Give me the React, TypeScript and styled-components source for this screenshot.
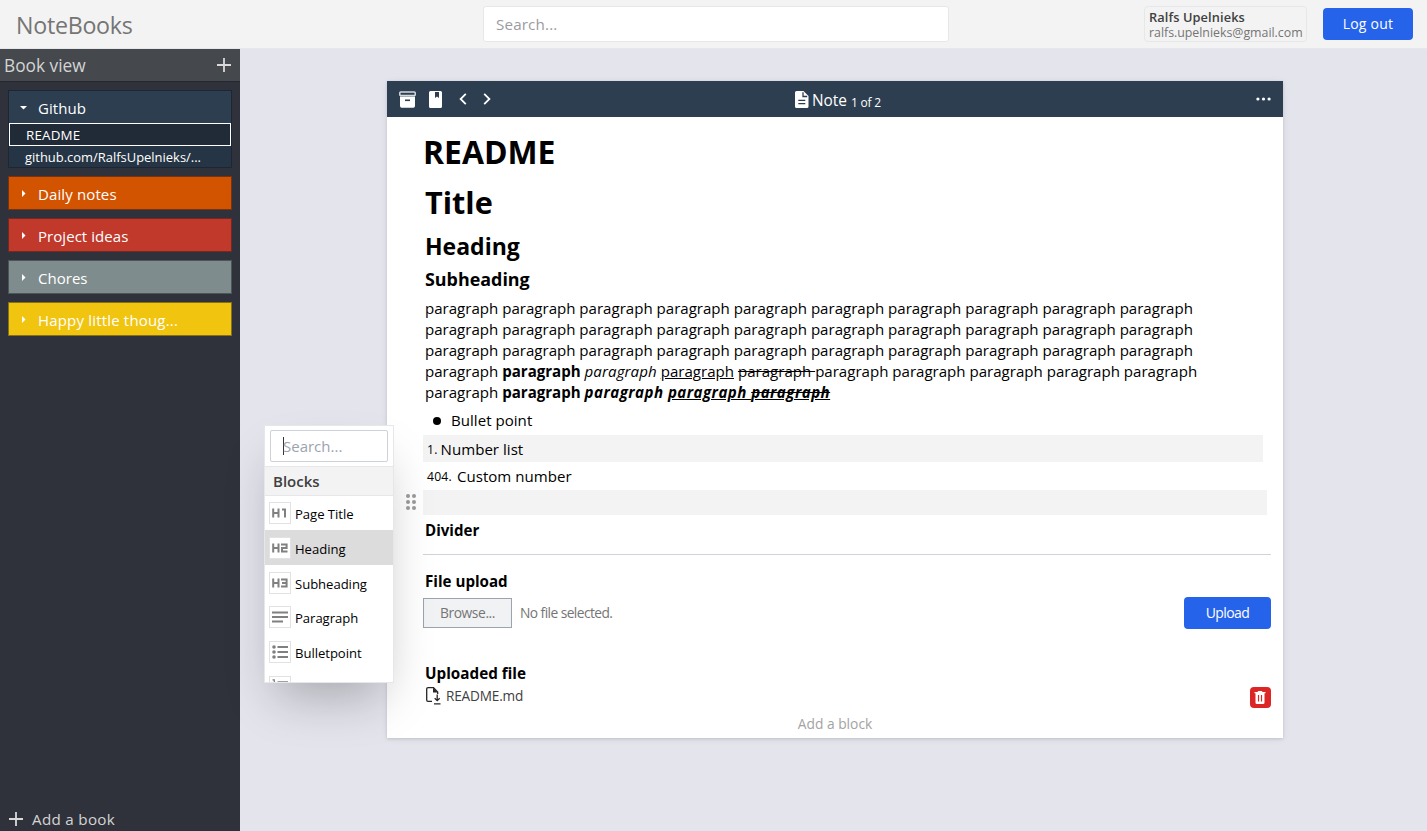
import React from "react";
import styled, { createGlobalStyle } from "styled-components";

const GlobalStyle = createGlobalStyle`
  * { box-sizing: border-box; }
  html, body { margin: 0; padding: 0; }
  body {
    font-family: "Open Sans", "Noto Sans", sans-serif;
    font-size: 15px;
    color: #000;
    background: #e4e4ed;
    overflow: hidden;
  }
  svg { display: block; flex: none; }
  button, input { font-family: inherit; margin: 0; }
`;

const Page = styled.div`
  display: flex;
  flex-direction: column;
  width: 100%;
  height: 100vh;
  min-height: 831px;
`;

const TopBar = styled.header`
  display: grid;
  grid-template-columns: 483px 466px 1fr;
  align-items: center;
  height: 49px;
  flex: none;
  background: #f3f3f3;
  border-bottom: 1px solid #e5e7eb;
`;

const Brand = styled.div`
  padding: 1px 0 0 16px;
  font-size: 23.2px;
  line-height: 32px;
  letter-spacing: -0.25px;
  color: #757575;
`;

const SearchInput = styled.input`
  height: 36px;
  padding: 0 12px;
  border: 1px solid #e5e7eb;
  border-radius: 3px;
  background: #fff;
  font-size: 15.2px;
  letter-spacing: 0.15px;
  outline: none;
  &::placeholder { color: #9b9b9f; opacity: 1; }
`;

const Account = styled.div`
  display: flex;
  justify-content: flex-end;
  align-items: center;
  gap: 16px;
  padding-right: 14px;
`;

const UserCard = styled.div`
  width: 163px;
  height: 36px;
  padding: 3px 4px 0;
  border: 1px solid #e5e7eb;
  border-radius: 4px;
  white-space: nowrap;
`;

const UserName = styled.div`
  font-size: 12.8px;
  font-weight: 600;
  line-height: 15px;
  letter-spacing: 0.1px;
  color: #404040;
`;

const UserMail = styled.div`
  font-size: 12.4px;
  line-height: 15px;
  letter-spacing: -0.03px;
  color: #757575;
`;

const PrimaryButton = styled.button<{ $width: number; $tracking: string }>`
  width: ${(p) => p.$width}px;
  height: 32px;
  padding: 0 0 1px;
  border: 0;
  border-radius: 4px;
  background: #2563eb;
  color: #fff;
  font-size: 14px;
  letter-spacing: ${(p) => p.$tracking};
`;

const Body = styled.div`
  display: flex;
  flex: 1;
  min-height: 0;
`;

const Sidebar = styled.aside`
  display: flex;
  flex-direction: column;
  width: 240px;
  flex: none;
  background: #2f323b;
`;

const SidebarHeader = styled.div`
  display: flex;
  align-items: center;
  justify-content: space-between;
  height: 33px;
  padding: 0 9px 0 4px;
  background: #45484d;
  border-bottom: 1px solid #26282e;
  color: #d4d4d4;
  font-size: 17.3px;
`;

const BookList = styled.div`
  display: flex;
  flex-direction: column;
  gap: 8px;
  flex: 1;
  padding: 8px;
`;

const Book = styled.section<{ $color: string; $edge: string }>`
  border: 1px solid ${(p) => p.$edge};
  background: ${(p) => p.$color};
  color: #fff;
`;

const BookTitle = styled.div<{ $tracking?: number }>`
  display: flex;
  align-items: center;
  height: 32px;
  padding-left: 10px;
  gap: 10px;
  font-size: 15px;
  line-height: 20px;
  letter-spacing: ${(p) => p.$tracking ?? 0.08}px;
  span { padding-top: 1px; }
`;

const NoteLink = styled.div<{ $active?: boolean }>`
  height: ${(p) => (p.$active ? 23 : 21)}px;
  padding-left: 16px;
  border: ${(p) => (p.$active ? "1px solid #fff" : "0")};
  background: ${(p) => (p.$active ? "#212b38" : "#263545")};
  font-size: ${(p) => (p.$active ? 13.4 : 12.95)}px;
  letter-spacing: ${(p) => (p.$active ? 0.18 : 0)}px;
  line-height: 22px;
  white-space: nowrap;
`;

const AddBook = styled.button`
  display: flex;
  align-items: center;
  gap: 9px;
  height: 24px;
  padding: 0 9px;
  border: 0;
  background: none;
  color: #d4d4d4;
  font-size: 15.2px;
  letter-spacing: 0.3px;
`;

const Main = styled.main`
  flex: 1;
  padding: 32px 144px 0 147px;
  background: #e4e4ed;
`;

const Note = styled.article`
  position: relative;
  width: 896px;
  height: 657px;
  background: #fff;
  box-shadow: 0 1px 3px rgba(0, 0, 0, 0.12), 0 1px 8px rgba(0, 0, 0, 0.06);
`;

const NoteBar = styled.div`
  display: grid;
  grid-template-columns: 1fr auto 1fr;
  align-items: center;
  height: 36px;
  padding: 0 12px;
  background: #2c3e50;
  color: #fff;
`;

const BarTools = styled.div`
  display: flex;
  align-items: center;
  gap: 13px;
`;

const Pager = styled.div`
  display: flex;
  gap: 16px;
  margin-left: 4px;
`;

const BarTitle = styled.div`
  display: flex;
  align-items: baseline;
  padding: 2px 0 0 6px;
  font-size: 15.4px;
  svg { align-self: center; margin: -2px 3px 0 0; }
  small { font-size: 12px; margin-left: 4px; letter-spacing: -0.2px; transform: translateY(1px); }
`;

const BarMenu = styled.div`
  display: flex;
  justify-content: flex-end;
`;

const Blocks = styled.div`
  display: flex;
  flex-direction: column;
  padding: 14px 12px 0 36px;
`;

const Block = styled.div<{ $h: number; $size?: number; $inset?: number; $above?: number }>`
  height: ${(p) => p.$h}px;
  line-height: ${(p) => p.$h}px;
  margin-top: ${(p) => p.$above ?? 0}px;
  padding-left: ${(p) => p.$inset ?? 2}px;
  font-size: ${(p) => p.$size ?? 15.1}px;
  font-weight: 700;
  white-space: nowrap;
`;

const Paragraph = styled.p`
  margin: 2px 0 0;
  padding-left: 2px;
  font-size: 15.07px;
  line-height: 21px;
  white-space: nowrap;
  em { letter-spacing: 0.1px; }
  b em { letter-spacing: 0.47px; }
`;

const ListRow = styled.div<{ $h: number; $shaded?: boolean; $trim?: number; $gap: number; $top?: number }>`
  display: flex;
  align-items: center;
  gap: ${(p) => p.$gap}px;
  height: ${(p) => p.$h}px;
  margin-right: ${(p) => p.$trim ?? 0}px;
  padding: ${(p) => p.$top ?? 1}px 0 0 4px;
  background: ${(p) => (p.$shaded ? "#f3f3f3" : "transparent")};
  font-size: 15.05px;
  letter-spacing: 0.03px;
`;

const Bullet = styled.i`
  width: 8px;
  height: 8px;
  margin: 2px 0 0 6px;
  border-radius: 50%;
  background: #000;
`;

const Marker = styled.span`
  font-size: 12.2px;
  letter-spacing: 0.2px;
`;

const EmptyRow = styled.div`
  position: relative;
  height: 25px;
  margin-right: 4px;
  background: #f3f3f3;
`;

const DragHandle = styled.div`
  position: absolute;
  left: -17px;
  top: 4px;
  display: grid;
  grid-template-columns: 4px 4px;
  gap: 2px;
  i { width: 4px; height: 4px; border-radius: 50%; background: #9b9b9b; }
`;

const Rule = styled.hr`
  width: 100%;
  height: 1px;
  margin: 8px 0 15px;
  border: 0;
  background: #d1d3da;
`;

const FileRow = styled.div`
  display: flex;
  align-items: center;
  height: 32px;
  margin-top: 4px;
  color: #757575;
  font-size: 13.8px;
  letter-spacing: -0.57px;
  > span { padding-bottom: 2px; }
  ${PrimaryButton} { margin-left: auto; }
`;

const BrowseButton = styled.button`
  width: 89px;
  height: 30px;
  margin-right: 8px;
  padding: 0 0 2px;
  border: 1px solid #9ca3af;
  background: #f1f2f4;
  color: #757575;
  font-size: 13.8px;
  letter-spacing: -0.4px;
`;

const Attachment = styled.div`
  display: flex;
  align-items: center;
  gap: 5px;
  height: 24px;
  padding-left: 3px;
  font-size: 13.6px;
  letter-spacing: -0.17px;
  color: #404040;
  > span { padding-bottom: 1px; }
`;

const DeleteButton = styled.button`
  display: flex;
  align-items: center;
  justify-content: center;
  width: 21px;
  height: 21px;
  margin: 2px 0 0 auto;
  padding: 0 1px 0 0;
  border: 0;
  border-radius: 4px;
  background: #dc2626;
`;

const AddBlock = styled.div`
  height: 30px;
  margin-right: 24px;
  line-height: 31px;
  text-align: center;
  font-size: 13.8px;
  color: #a3a3a3;
`;

const Popup = styled.div`
  position: absolute;
  left: -123px;
  top: 344px;
  width: 130px;
  height: 258px;
  overflow: hidden;
  border: 1px solid #e5e7eb;
  background: #fff;
  box-shadow: 0 25px 50px -12px rgba(0, 0, 0, 0.27);
`;

const PopupSearch = styled.div`
  display: flex;
  align-items: center;
  height: 32px;
  margin: 4px 5px 4px;
  padding-left: 12px;
  border: 1px solid #cdd1d8;
  border-radius: 2px;
  color: #9ca3af;
  font-size: 15px;
`;

const Caret = styled.i`
  width: 1px;
  height: 18px;
  margin-right: -1px;
  background: #333;
`;

const PopupHeading = styled.div`
  height: 30px;
  padding-left: 8px;
  border-top: 1px solid #e5e7eb;
  border-bottom: 1px solid #e5e7eb;
  background: #f3f3f3;
  color: #404040;
  font-size: 15px;
  font-weight: 600;
  line-height: 29px;
`;

const PopupItem = styled.div<{ $active?: boolean; $h?: number }>`
  display: flex;
  align-items: center;
  gap: 4px;
  height: ${(p) => p.$h ?? 35}px;
  padding-left: 4px;
  background: ${(p) => (p.$active ? "#dcdcdc" : "#fff")};
  font-size: 13.1px;
  letter-spacing: -0.04px;
  white-space: nowrap;
  span { padding-top: 2px; }
`;

const IconBox = styled.div`
  display: flex;
  align-items: center;
  justify-content: center;
  width: 22px;
  height: 22px;
  border: 1px solid #e2e2e2;
  background: #fff;
`;

const Plus = ({ size }: { size: number }) => (
  <svg width={size} height={size} viewBox="0 0 14 14" fill="none" stroke="#d9d9d9" strokeWidth="1.8">
    <path d="M7 0v14M0 7h14" />
  </svg>
);

const Triangle = ({ open }: { open?: boolean }) => (
  <svg width="9" height="9" viewBox="0 0 9 9" fill="#fff">
    <path d={open ? "M1 3h7L4.500 6.500z" : "M3 1l3.500 3.500L3 8z"} />
  </svg>
);

const ArchiveIcon = () => (
  <svg width="17" height="17" viewBox="0 0 17 17">
    <path d="M1 5.500h15V15a1.700 1.700 0 0 1-1.700 1.700H2.700A1.700 1.700 0 0 1 1 15z" fill="#fff" />
    <rect x="0.800" y="0.900" width="15.400" height="3.700" rx="0.800" fill="none" stroke="#d5d9dd" strokeWidth="1.500" />
    <path d="M6 9.300h5" stroke="#2c3e50" strokeWidth="1.600" />
  </svg>
);

const BookmarkIcon = () => (
  <svg width="13" height="17" viewBox="0 0 13 17">
    <path d="M1.500 0h10A1.500 1.500 0 0 1 13 1.500v14a1.500 1.500 0 0 1-1.500 1.500h-10A1.500 1.500 0 0 1 0 15.500v-14A1.500 1.500 0 0 1 1.500 0z" fill="#fff" />
    <path d="M6 1h4v6L8 5.400 6 7z" fill="#2c3e50" />
  </svg>
);

const Chevron = ({ right }: { right?: boolean }) => (
  <svg width="8" height="12" viewBox="0 0 8 12" fill="none" stroke="#fff" strokeWidth="1.800">
    <path d={right ? "M1.200 0.800L6.400 6l-5.200 5.200" : "M6.800 0.800L1.600 6l5.200 5.200"} />
  </svg>
);

const FileIcon = () => (
  <svg width="14" height="17" viewBox="0 0 14 17">
    <path d="M1.600 0H8.500L13.500 5v10.400A1.600 1.600 0 0 1 11.900 17H1.600A1.600 1.600 0 0 1 0 15.400V1.600A1.600 1.600 0 0 1 1.600 0z" fill="#fff" />
    <path d="M8 1.300V5.500h4.200M3.300 9.300h7M3.300 12.700h7" fill="none" stroke="#2c3e50" strokeWidth="1.300" />
  </svg>
);

const Dots = () => (
  <svg width="15" height="4" viewBox="0 0 15 4" fill="#fff">
    <circle cx="1.900" cy="2" r="1.600" />
    <circle cx="7.500" cy="2" r="1.600" />
    <circle cx="13.100" cy="2" r="1.600" />
  </svg>
);

const HeadingIcon = ({ level }: { level: 1 | 2 | 3 }) => {
  const digit = {
    1: "M10 2h3V10",
    2: "M9 2h5.600v3.500h-4.600v3.500h5.500",
    3: "M9 2h5.600v7H9M10 5.500h4.600",
  }[level];
  return (
    <svg width="16" height="12" viewBox="0 -0.500 16 12" fill="none" stroke="#808080" strokeWidth="2">
      <path d="M1.200 1v9M6.500 1v9M1.200 5.500h5.500" />
      <path d={digit} />
    </svg>
  );
};

const TextIcon = () => (
  <svg width="16" height="12" viewBox="0 0 16 12" stroke="#808080" strokeWidth="1.800">
    <path d="M0 1.500h16M0 6h16M0 10.500h11" />
  </svg>
);

const BulletIcon = () => (
  <svg width="16" height="14" viewBox="0 0 16 14" stroke="#808080" strokeWidth="1.800" fill="#808080">
    <path d="M5.500 2H16M5.500 7H16M5.500 12H16" />
    <g stroke="none">
      <circle cx="2" cy="2" r="1.800" />
      <circle cx="2" cy="7" r="1.800" />
      <circle cx="2" cy="12" r="1.800" />
    </g>
  </svg>
);

const NumberIcon = () => (
  <svg width="16" height="16" viewBox="0 0 16 16" fill="none" stroke="#808080" strokeWidth="1.300">
    <path d="M0.500 0.800h1.800V5M5.500 3H16M5.500 8H16M5.500 13H16M0.500 7h2.500L0.500 10h2.500M0.500 12h2.500v3.500H0.500" />
  </svg>
);

const DownloadFileIcon = () => (
  <svg width="15" height="18" viewBox="0 0 15 18" fill="none" stroke="#262626" strokeWidth="1.300">
    <path d="M6 14.300H2A1.300 1.300 0 0 1 .7 13V2A1.300 1.300 0 0 1 2 .7h5.500L11.700 5v2" />
    <path d="M7 .7V5.500h5z" fill="#262626" stroke="none" />
    <path d="M11.200 7.500v6M8.700 11.200l2.500 2.500 2.500-2.500M8 16.900h6.500" />
  </svg>
);

const TrashIcon = () => (
  <svg width="12" height="13" viewBox="0 0 12 13">
    <path d="M0.500 0.900H3.500L4.200 0h3.600l0.700 0.900h3V2.300h-1v9.200A1.400 1.400 0 0 1 9.100 13H2.900a1.400 1.400 0 0 1-1.400-1.500V2.300h-1z" fill="#fff" />
    <path d="M4.500 4v6.500M7.500 4v6.500" stroke="#dc2626" strokeWidth="1.200" />
  </svg>
);

const books = [
  { name: "Daily notes", color: "#d35400", edge: "#753312", tracking: 0.12 },
  { name: "Project ideas", color: "#c0392b", edge: "#732923", tracking: 0.05 },
  { name: "Chores", color: "#7f8c8d", edge: "#4c5557", tracking: 0.02 },
  { name: "Happy little thoug...", color: "#f1c40f", edge: "#87701a", tracking: 0.18 },
];

const words = (count: number) => Array(count).fill("paragraph").join(" ");

export default function App() {
  return (
    <Page>
      <GlobalStyle />
      <TopBar>
        <Brand>NoteBooks</Brand>
        <SearchInput placeholder="Search..." />
        <Account>
          <UserCard>
            <UserName>Ralfs Upelnieks</UserName>
            <UserMail>ralfs.upelnieks@gmail.com</UserMail>
          </UserCard>
          <PrimaryButton $width={90} $tracking="0.25px">Log out</PrimaryButton>
        </Account>
      </TopBar>
      <Body>
        <Sidebar>
          <SidebarHeader>
            Book view
            <Plus size={14} />
          </SidebarHeader>
          <BookList>
            <Book $color="#2c3e50" $edge="#1c2733">
              <BookTitle>
                <Triangle open />
                <span>Github</span>
              </BookTitle>
              <NoteLink $active>README</NoteLink>
              <NoteLink>github.com/RalfsUpelnieks/...</NoteLink>
            </Book>
            {books.map((book) => (
              <Book key={book.name} $color={book.color} $edge={book.edge}>
                <BookTitle $tracking={book.tracking}>
                  <Triangle />
                  <span>{book.name}</span>
                </BookTitle>
              </Book>
            ))}
          </BookList>
          <AddBook>
            <Plus size={14} />
            Add a book
          </AddBook>
        </Sidebar>
        <Main>
          <Note>
            <NoteBar>
              <BarTools>
                <ArchiveIcon />
                <BookmarkIcon />
                <Pager>
                  <Chevron />
                  <Chevron right />
                </Pager>
              </BarTools>
              <BarTitle>
                <FileIcon />
                Note <small>1 of 2</small>
              </BarTitle>
              <BarMenu>
                <Dots />
              </BarMenu>
            </NoteBar>
            <Blocks>
              <Block $h={42} $size={31.9} $inset={0}>README</Block>
              <Block $h={56} $size={30.6} $above={1}>Title</Block>
              <Block $h={32} $size={23}>Heading</Block>
              <Block $h={34} $size={17.9}>Subheading</Block>
              <Paragraph>
                {words(10)}<br />
                {words(10)}<br />
                {words(10)}<br />
                paragraph <b>paragraph</b> <em>paragraph</em> <u>paragraph</u> <s>paragraph </s>{words(5)}<br />
                paragraph <b>paragraph <em>paragraph <u>paragraph <s>paragraph</s></u></em></b>
              </Paragraph>
              <ListRow $h={32} $gap={10}>
                <Bullet />
                Bullet point
              </ListRow>
              <ListRow $h={27} $gap={3} $shaded $trim={8}>
                <Marker>1.</Marker>
                Number list
              </ListRow>
              <ListRow $h={28} $gap={5} $top={0}>
                <Marker>404.</Marker>
                Custom number
              </ListRow>
              <EmptyRow>
                <DragHandle>
                  <i /><i /><i /><i /><i /><i />
                </DragHandle>
              </EmptyRow>
              <Block $h={31}>Divider</Block>
              <Rule />
              <Block $h={23} $size={15.15}>File upload</Block>
              <FileRow>
                <BrowseButton>Browse...</BrowseButton>
                <span>No file selected.</span>
                <PrimaryButton $width={87} $tracking="-0.6px">Upload</PrimaryButton>
              </FileRow>
              <Block $h={22} $size={15.25} $above={33}>Uploaded file</Block>
              <Attachment>
                <DownloadFileIcon />
                <span>README.md</span>
                <DeleteButton><TrashIcon /></DeleteButton>
              </Attachment>
              <AddBlock>Add a block</AddBlock>
            </Blocks>
            <Popup>
              <PopupSearch>
                <Caret />
                Search...
              </PopupSearch>
              <PopupHeading>Blocks</PopupHeading>
              <PopupItem $h={34}><IconBox><HeadingIcon level={1} /></IconBox><span>Page Title</span></PopupItem>
              <PopupItem $active><IconBox><HeadingIcon level={2} /></IconBox><span>Heading</span></PopupItem>
              <PopupItem><IconBox><HeadingIcon level={3} /></IconBox><span>Subheading</span></PopupItem>
              <PopupItem $h={34}><IconBox><TextIcon /></IconBox><span>Paragraph</span></PopupItem>
              <PopupItem><IconBox><BulletIcon /></IconBox><span>Bulletpoint</span></PopupItem>
              <PopupItem><IconBox><NumberIcon /></IconBox></PopupItem>
            </Popup>
          </Note>
        </Main>
      </Body>
    </Page>
  );
}
